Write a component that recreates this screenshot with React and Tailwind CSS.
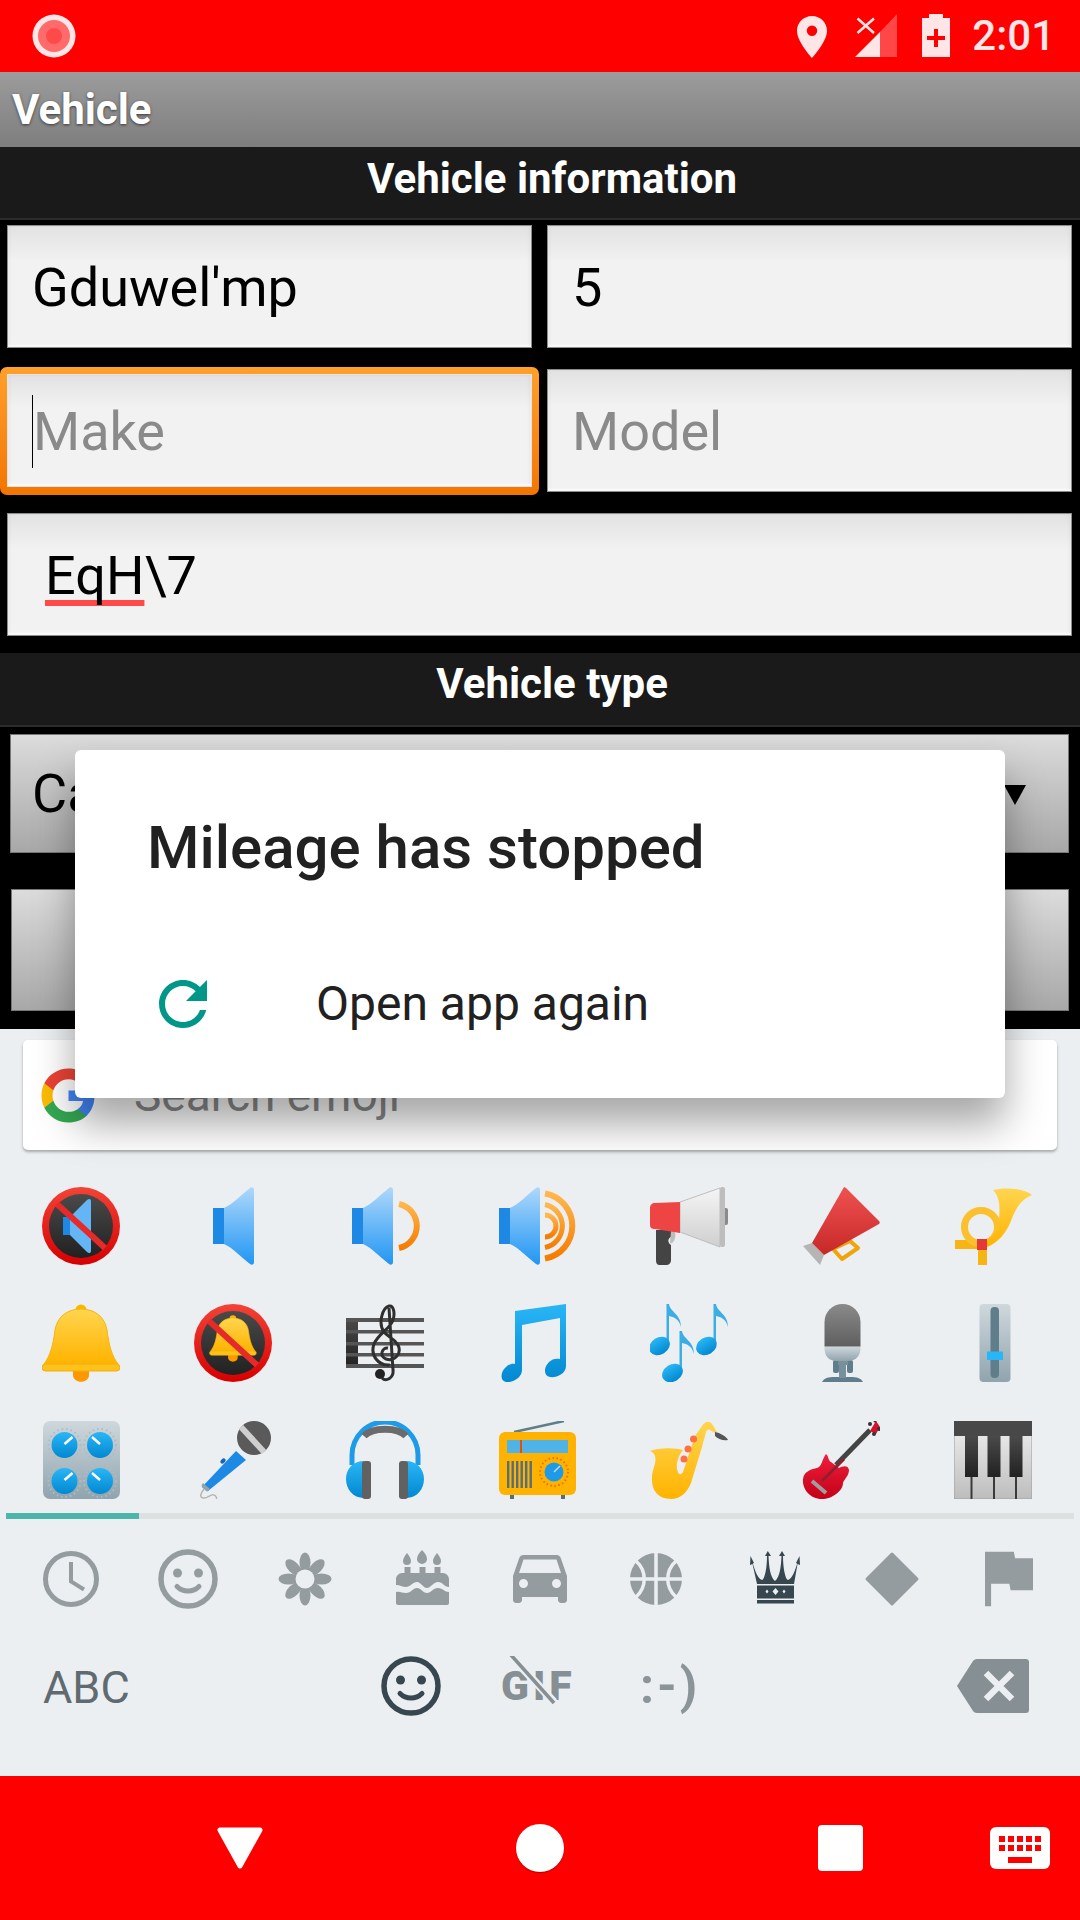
const roboto = "font-['Roboto',sans-serif]";

function Gradients() {
  const stops = {
    gBlue: ["#aed8fb", "#2196f3"],
    gBlueDeep: ["#29b6f6", "#0288d1"],
    gOrange: ["#ffb74d", "#f57c00"],
    gGold: ["#ffd54f", "#ffb300"],
    gDark: ["#4a4a4a", "#212121"],
    gRed: ["#f44336", "#d50000"],
    gCheer: ["#ef5350", "#c62828"],
    gSilver: ["#f5f5f5", "#cfcfcf"],
    gSteel: ["#cfd8dc", "#90a4ae"],
    gMic: ["#8a8a8a", "#5f5f5f"],
    gGuitar: ["#ef1f3c", "#c40018"],
  };
  return (
    <svg className="absolute w-0 h-0">
      <defs>
        {Object.entries(stops).map(([id, [a, b]]) => (
          <linearGradient key={id} id={id} x1="0" y1="0" x2="0" y2="1">
            <stop offset="0" stopColor={a} />
            <stop offset="1" stopColor={b} />
          </linearGradient>
        ))}
      </defs>
    </svg>
  );
}

function E({ children }) {
  return (
    <svg viewBox="0 0 78 78" className="w-[78px] h-[78px]">
      {children}
    </svg>
  );
}

function SpeakerShape({ x = 0 }) {
  return (
    <g transform={`translate(${x} 0)`}>
      <path d="M0 21h12v36H0z" fill="#1e88e5" />
      <path d="M11 21C20 17 28 8 37 1c2-1.500 4-.5 4 2v72c0 2.500-2 3.500-4 2C28 70 20 61 11 57z" fill="url(#gBlue)" />
    </g>
  );
}

function NoSign({ children }) {
  return (
    <E>
      <circle cx="39" cy="39" r="39" fill="url(#gRed)" />
      <circle cx="39" cy="39" r="32" fill="url(#gDark)" />
      {children}
      <path d="M15 17 63 61" stroke="#e62a2a" strokeWidth="6" />
    </E>
  );
}

function BellShape() {
  return (
    <g>
      <path d="M31 60h16v11c0 9-16 9-16 0z" fill="#ff9800" />
      <circle cx="39" cy="6" r="5.500" fill="#f9b700" />
      <path d="M39 5C24 5 15 14 13 26 11 42 8 52 2 60h74c-6-8-9-18-11-34C63 14 54 5 39 5z" fill="url(#gGold)" stroke="#f6b60a" strokeWidth="1" />
      <rect x="0" y="60" width="78" height="7" rx="3.500" fill="#fcc21b" stroke="#f2ae0c" strokeWidth="1" />
    </g>
  );
}

function Eighth({ x = 0, y = 0 }) {
  return (
    <g transform={`translate(${x} ${y})`}>
      <path d="M16.500 0h2.500c1 8 12 10 12 23-2-8-7-10-12-11v30h-2.500z" fill="#3aaee5" />
      <ellipse cx="9.500" cy="42" rx="11" ry="8.500" transform="rotate(-32 9.500 42)" fill="url(#gBlueDeep)" />
    </g>
  );
}

const emoji = [
  <NoSign key="mute">
    <path d="M21 30h8v18h-8z" fill="#1e88e5" />
    <path d="M28 30 45 13c2-2 4-1 4 1v50c0 2-2 3-4 1L28 48z" fill="#64b5f6" />
  </NoSign>,
  <E key="speaker">
    <SpeakerShape x={19} />
  </E>,
  <E key="speaker1">
    <SpeakerShape x={6} />
    <path d="M53 17a22.500 22.500 0 0 1 0 44" fill="none" stroke="url(#gOrange)" strokeWidth="6" />
  </E>,
  <E key="speaker3">
    <SpeakerShape x={1} />
    <g fill="none" stroke="url(#gOrange)">
      <path d="M47 6.500a33 33 0 0 1 0 65" strokeWidth="6" />
      <path d="M47 17.500a22 22 0 0 1 0 43" strokeWidth="5" />
      <path d="M47 28a11 11 0 0 1 0 22" strokeWidth="5" />
    </g>
  </E>,
  <E key="loud">
    <rect x="72" y="21" width="6" height="17" rx="2" fill="#8a8a8a" />
    <path d="M6 43h15v7c-4 2-3 6 0 8v15c0 3-2 5-5 5H10c-3 0-4-2-4-5z" fill="#444" />
    <path d="M21 44c4-1 5 3 4 7s-3 6-5 5z" fill="#bdbdbd" />
    <path d="M30 15 70 1v59L30 45z" fill="url(#gSilver)" stroke="#bdbdbd" strokeWidth="1" />
    <rect x="70" y="0" width="5" height="60" rx="2" fill="#bdbdbd" />
    <path d="M5 16l25-1v31L5 42c-3 0-5-1-5-4V21c0-3 2-5 5-5z" fill="#ef4444" />
  </E>,
  <E key="cheer">
    <path d="M31 62 48 54 56 61 40 72z" fill="none" stroke="#f0a30a" strokeWidth="4" strokeLinejoin="round" />
    <path d="M1 59 10 56 22 68 18 78z" fill="#b5b5b5" />
    <path d="M42 0c1 0 2 1 3 2l32 32c1 1 1 2 0 3L22 68 10 56z" fill="url(#gCheer)" />
  </E>,
  <E key="horn">
    <path d="M1 53h26v9H1z" fill="#f7b515" />
    <circle cx="27" cy="40" r="16.500" fill="none" stroke="#fbc02d" strokeWidth="7" />
    <path d="M39 3C50 0 70 1 78 8 68 12 62 20 57 34 52 46 44 57 30 61L30 54C40 51 44 42 45 33 46 20 46 10 39 3z" fill="url(#gGold)" />
    <rect x="23" y="52" width="10" height="11" fill="#e53935" />
    <path d="M24 63h9v15h-9z" fill="#f7b515" />
  </E>,
  <E key="bell">
    <BellShape />
  </E>,
  <NoSign key="nobell">
    <g transform="translate(15.500 11) scale(.6)">
      <BellShape />
    </g>
  </NoSign>,
  <E key="score">
    <rect x="0" y="14" width="12" height="50" fill="url(#gDark)" />
    <g fill="#555">
      <rect x="0" y="14" width="78" height="4" />
      <rect x="0" y="26" width="78" height="3.500" />
      <rect x="0" y="38" width="78" height="3.500" />
      <rect x="0" y="49" width="78" height="3.500" />
      <rect x="0" y="60" width="78" height="4" />
    </g>
    <path d="M42 44c-6-1-9 8-2 11 9 3 16-6 12-14-4-7-10-8-14-13-6-8-2-24 5-26 5-1 6 8 4 14-2 8-15 14-19 24-4 11 4 22 16 21M43 4l4 62c1 8-7 12-11 8" fill="none" stroke="#2f2f2f" strokeWidth="3" />
    <circle cx="34" cy="70" r="5" fill="#222" />
  </E>,
  <E key="note">
    <path d="M17 7 68 0v62c0 8-10 12-16 11-6-1-7-9-1-15 3-3 7-4 11-3V14L24 21v45c0 8-10 13-16 12-6-1-6-10 0-15 3-3 7-4 9-3z" fill="url(#gBlueDeep)" />
  </E>,
  <E key="notes">
    <Eighth x={0} y={0} />
    <Eighth x={47} y={0} />
    <Eighth x={13} y={27} />
  </E>,
  <E key="studio">
    <path d="M20 78c2-4 6-5 13-5h15c7 0 11 1 13 5z" fill="#607d8b" />
    <rect x="37" y="60" width="7" height="14" fill="#78909c" />
    <rect x="31" y="56" width="6" height="13" rx="2" fill="#607d8b" />
    <rect x="45" y="56" width="6" height="13" rx="2" fill="#607d8b" />
    <path d="M36 56h10v5H36z" fill="#78909c" />
    <path d="M22.500 42.500h36V44c0 8-5 13-12 13H34c-7 0-11.500-5-11.500-13z" fill="url(#gSteel)" />
    <path d="M22.500 18a18 18 0 0 1 36 0v24.500h-36z" fill="url(#gMic)" />
  </E>,
  <E key="level">
    <rect x="25.500" y="0" width="31" height="78" rx="4" fill="url(#gSteel)" />
    <rect x="36.500" y="3" width="8.500" height="71" rx="4" fill="#607d8b" />
    <rect x="33" y="47.500" width="16" height="8.500" fill="#29b6f6" />
  </E>,
  <E key="knobs">
    <rect x="1" y="0" width="77" height="78" rx="7" fill="url(#gSteel)" />
    {[
      [22.500, 24, 1],
      [58, 24, -1],
      [22.500, 60, 1],
      [58, 60, -1],
    ].map(([x, y, d], i) => (
      <g key={i}>
        <circle cx={x} cy={y} r="16" fill="none" stroke="#aebcc3" strokeWidth="2" strokeDasharray="1.500 3" />
        <circle cx={x} cy={y} r="13" fill="url(#gBlueDeep)" />
        <path d={`M${x} ${y - 1}l${d * 8} -7`} stroke="#fff" strokeWidth="2.500" />
      </g>
    ))}
  </E>,
  <E key="mic">
    <path d="M10 68c-3 4-5 8-1 9 5 1 8-5 11-3 3 1 2 3 3 4" fill="none" stroke="#b5b5b5" strokeWidth="1.500" />
    <path d="M8 66 42 30l10 9-38 31z" fill="#1e88e5" />
    <path d="M8 66c-1-1 0-3 1-4l7 6c-1 2-3 3-4 2z" fill="#90a4ae" />
    <ellipse cx="29" cy="40" rx="3" ry="2" transform="rotate(-45 29 40)" fill="#1565c0" />
    <circle cx="60" cy="17" r="17" fill="#5a5a5a" />
    <path d="M47 6 70 31" stroke="#cfcfcf" strokeWidth="6" />
  </E>,
  <E key="phones">
    <path d="M6 44V34a33 33 0 0 1 66 0v10" fill="none" stroke="#1e9be8" strokeWidth="5" />
    <path d="M18 15C26 6 52 6 60 15" fill="none" stroke="#6b6b6b" strokeWidth="7" />
    <path d="M18 40v37C7 77 0 68 0 58s7-18 18-18zM60 40v37c11 0 18-9 18-19s-7-18-18-18z" fill="url(#gBlueDeep)" />
    <rect x="16" y="40" width="9" height="38" rx="3" fill="#616161" />
    <rect x="53" y="40" width="9" height="38" rx="3" fill="#616161" />
  </E>,
  <E key="radio">
    <path d="M16 11 66 0" stroke="#607d8b" strokeWidth="2.500" />
    <rect x="12" y="72" width="4" height="6" fill="#546e7a" />
    <rect x="63" y="72" width="4" height="6" fill="#546e7a" />
    <rect x="1" y="11" width="77" height="63" rx="6" fill="#ffb300" />
    <rect x="9" y="19" width="61" height="13" fill="#4fb3e8" />
    <rect x="22" y="19" width="2" height="13" fill="#e65100" />
    <g fill="#546e7a">
      {[9, 13.500, 18, 22.500, 27, 31.500].map((x) => (
        <rect key={x} x={x} y="40" width="2.400" height="27" />
      ))}
    </g>
    <circle cx="56" cy="51" r="14" fill="none" stroke="#ef6c00" strokeWidth="2" strokeDasharray="1.500 2.500" />
    <circle cx="56" cy="51" r="9.500" fill="#1e9be8" />
    <path d="M56 51l6-6" stroke="#cfd8dc" strokeWidth="1.500" />
  </E>,
  <E key="sax">
    <path d="M0 30C10 26 26 27 33 29c-5 6-8 16-5 22 1 3 3 3 5 0L45 15l7-10c2-4 7-6 10-2l5 8-2 1-5-3c-2-1-3 0-4 2-1 5-3 10-4 15L41 62C37 72 30 78 21 78 7 78 1 68 2 56c0-8 5-14 3-21-1-3-3-4-5-5z" fill="url(#gGold)" />
    <circle cx="43.500" cy="18" r="3.500" fill="#ff7043" />
    <circle cx="38" cy="28" r="3.500" fill="#ff7043" />
    <circle cx="34" cy="38" r="3.500" fill="#ff7043" />
    <path d="M65 11c5 1 11 4 13 8-5 1-10-1-13-4z" fill="#555" />
  </E>,
  <E key="guitar">
    <path d="M34 44 68 9" stroke="#444" strokeWidth="5" />
    <path d="M24 33C27 35 26 40 29 41l8 6c4-2 9-3 10 2 0 6-5 9-6 13 0 8-11 16-21 16C8 78 0 68 1 58c1-8 9-10 14-11 5-1 5-9 9-14z" fill="url(#gGuitar)" />
    <path d="M10 60 24 72" stroke="#9e9e9e" strokeWidth="4" />
    <path d="M20 60 42 38" stroke="#8c2030" strokeWidth="3" />
    <path d="M68 10 74 0l4 6-4 7z" fill="#d7112c" />
    <g fill="#333">
      <circle cx="68" cy="3" r="2" />
      <circle cx="73" cy="0" r="1.500" />
      <circle cx="77" cy="8" r="2" />
      <circle cx="72" cy="13" r="2" />
    </g>
  </E>,
  <E key="piano">
    <defs>
      <linearGradient id="gKeys" x1="0" y1="0" x2="0" y2="1">
        <stop offset="0" stopColor="#f0f0f0" />
        <stop offset="1" stopColor="#bdbdbd" />
      </linearGradient>
    </defs>
    <rect x="0" y="0" width="78" height="78" fill="url(#gKeys)" stroke="#9e9e9e" strokeWidth="1" />
    <rect x="0" y="0" width="78" height="15" fill="#484848" />
    <g fill="url(#gDark)">
      <rect x="11" y="15" width="13" height="41" />
      <rect x="33.500" y="15" width="13" height="41" />
      <rect x="55.500" y="15" width="13" height="41" />
    </g>
    <g fill="#3a3a3a">
      <rect x="16.500" y="56" width="2" height="22" />
      <rect x="39" y="56" width="2" height="22" />
      <rect x="61" y="56" width="2" height="22" />
    </g>
  </E>,
];

function Clock() {
  return (
    <svg viewBox="0 0 60 60" className="w-[60px] h-[60px]" fill="none" stroke="#949ca0" strokeWidth="5">
      <circle cx="30" cy="30" r="25.500" />
      <path d="M30 13v19.500l13 8" strokeWidth="4" />
    </svg>
  );
}

function Smile({ color = "#949ca0" }) {
  return (
    <svg viewBox="0 0 60 60" className="w-[60px] h-[60px]" fill="none" stroke={color} strokeWidth="5.500">
      <circle cx="30" cy="30" r="27" />
      <circle cx="19.500" cy="24" r="4.500" fill={color} stroke="none" />
      <circle cx="40.500" cy="24" r="4.500" fill={color} stroke="none" />
      <path d="M19 37.500c6 6 16 6 22 0" strokeWidth="5" strokeLinecap="round" />
    </svg>
  );
}

function Flower() {
  return (
    <svg viewBox="0 0 60 60" className="w-[60px] h-[60px]" fill="#949ca0">
      {[0, 45, 90, 135, 180, 225, 270, 315].map((a) => (
        <ellipse key={a} cx="30" cy="13.500" rx="5.500" ry="10" transform={`rotate(${a} 30 30)`} />
      ))}
      <circle cx="30" cy="30" r="12" />
      <circle cx="30" cy="30" r="9.500" fill="#eceff1" />
    </svg>
  );
}

function Cake() {
  return (
    <svg viewBox="0 0 60 60" className="w-[60px] h-[60px] -translate-x-[1px]" fill="#949ca0">
      <path d="M15 4c2 3 4 5 4 8a4 4 0 0 1-8 0c0-3 2-5 4-8zM30 1c3 3 5 6 5 9a5 5 0 0 1-10 0c0-3 2-6 5-9zM45 4c2 3 4 5 4 8a4 4 0 0 1-8 0c0-3 2-5 4-8z" />
      <rect x="12.500" y="18" width="6" height="7" />
      <rect x="27.500" y="18" width="6" height="7" />
      <rect x="42.500" y="18" width="6" height="7" />
      <path d="M10 24h41c3 0 6 3 6 6v8c-5 0-6-5-11-5s-7 6-11 6-6-6-10-6-7 5-11 5-6-2-10-2v-6c0-3 3-6 6-6z" />
      <path d="M4 43c4-1 6 1 10 1 5 0 7-5 11-5s6 5 10 5 6-5 11-5 6 4 11 4v11c0 1-1 2-2 2H6c-1 0-2-1-2-2z" />
    </svg>
  );
}

function Car() {
  return (
    <svg viewBox="2 3 20 20" className="w-[60px] h-[60px]" fill="#949ca0">
      <path d="M18.920 6.010C18.720 5.420 18.160 5 17.500 5h-11c-.660 0-1.210.420-1.420 1.010L3 12v8c0 .550.450 1 1 1h1c.550 0 1-.450 1-1v-1h12v1c0 .550.450 1 1 1h1c.550 0 1-.450 1-1v-8l-2.080-5.990zM6.500 16c-.830 0-1.500-.670-1.500-1.500S5.670 13 6.500 13s1.500.670 1.500 1.500S7.330 16 6.500 16zm11 0c-.830 0-1.500-.670-1.500-1.500s.670-1.500 1.500-1.500 1.500.670 1.500 1.500-.670 1.500-1.500 1.500zM5 11l1.500-4.500h11L19 11H5z" />
    </svg>
  );
}

function Ball() {
  return (
    <svg viewBox="0 0 60 60" className="w-[60px] h-[60px] -translate-x-[1px]">
      <circle cx="30" cy="30" r="26" fill="#949ca0" />
      <g fill="none" stroke="#eceff1" strokeWidth="3.500">
        <path d="M30 2v56M2 30h56" />
        <path d="M10 12c11 10 11 26 0 36M50 12c-11 10-11 26 0 36" />
      </g>
    </svg>
  );
}

function Crown() {
  return (
    <svg viewBox="0 0 60 60" className="w-[60px] h-[60px]" fill="#37474f">
      <path d="M12 35 7.500 15 5 16l.5-9L9 14l-1.200.5C10 22 13 30 17 31c3-1 5-13 5-24h-2l2.800-5L26 7h-2.500C24 17 25 28 30 32c5-4 6-15 6.500-25H34l3-5 3 5h-2c0 11 2 23 5 24 4-1 7-9 9.200-16.500L51 14l3.500-7 .5 9-2.500-1L49 35z" />
      <rect x="12" y="36.500" width="37" height="13" />
      <rect x="12" y="51" width="37" height="3.500" />
      <path d="M30.500 39l3 3.500-3 3.500-3-3.500zM22 40.500l1.500 2-1.500 2-1.500-2zM39 40.500l1.500 2-1.500 2-1.500-2z" fill="#eceff1" />
    </svg>
  );
}

function Diamond() {
  return (
    <svg viewBox="0 0 60 60" className="w-[60px] h-[60px]" fill="#949ca0" stroke="#949ca0" strokeWidth="3" strokeLinejoin="round">
      <path d="M30 5 55 30 30 55 5 30z" />
    </svg>
  );
}

function Flag() {
  return (
    <svg viewBox="3.125 3.125 18.750 18.750" className="w-[60px] h-[60px]" fill="#949ca0">
      <path d="M14.400 6 14 4H5v17h1.900v-7h5.700l.4 2h7V6z" />
    </svg>
  );
}

function Backspace() {
  return (
    <svg viewBox="0 0 78 78" className="w-[78px] h-[78px]">
      <path d="M3 39 19 14c1-1 2-2 4-2h49c3 0 3 3 3 3v48c0 2-1 3-3 3H23c-2 0-3-1-4-2z" fill="#868f93" />
      <path d="M32 26 58 52M58 26 32 52" stroke="#eceff1" strokeWidth="6.500" />
    </svg>
  );
}

function GifOff() {
  return (
    <div className="relative w-[72px] h-[60px]">
      <span className={`${roboto} absolute left-0 top-[6px] text-[41px] leading-[48px] font-black tracking-[4px] text-[#868f93]`}>GIF</span>
      <svg viewBox="0 0 72 60" className="absolute inset-0 w-[72px] h-[60px]">
        <path d="M10 0 53 46" stroke="#eceff1" strokeWidth="8" />
        <path d="M10 -1 53 47" stroke="#868f93" strokeWidth="3.500" />
      </svg>
    </div>
  );
}

function Field({ children, focused, className = "" }) {
  const box =
    "h-full flex items-center pt-[1px] border bg-gradient-to-b from-[#e2e2e2] via-[#f2f2f2] via-[30%] to-[#f2f2f2] shadow-[inset_0_-2px_2px_rgba(255,255,255,0.7),inset_2px_0_3px_rgba(0,0,0,0.04),inset_-2px_0_3px_rgba(0,0,0,0.04)]";
  if (focused) {
    return (
      <div className={`relative h-full ${className}`}>
        <div className="absolute left-[-7px] right-[-7px] top-[-2px] bottom-[-3px] rounded-[7px] bg-gradient-to-b from-[#ffa02a] to-[#f37500]" />
        <div className={`relative ${box} border-[#e4e4e4] !h-[113px] mt-[5px]`}>{children}</div>
      </div>
    );
  }
  return <div className={`${box} border-[#8c8c8c] ${className}`}>{children}</div>;
}

export default function App() {
  return (
    <div className={`${roboto} relative w-[1080px] h-[1920px] flex flex-col bg-black overflow-hidden`}>
      <Gradients />

      {/* status bar */}
      <div className="h-[72px] flex items-center bg-[#ff0000] pl-[32px] pr-[25px]">
        <svg viewBox="0 0 44 44" className="w-[44px] h-[44px]">
          <circle cx="22" cy="22" r="21.500" fill="#ffe5e5" />
          <circle cx="22" cy="22" r="16" fill="#ff6b6b" />
          <circle cx="22" cy="22" r="8" fill="#ff4a4a" />
        </svg>
        <div className="ml-auto flex items-center">
          <svg viewBox="0 0 30 42" className="w-[30px] h-[42px] mt-[1px]">
            <path d="M15 0C6.700 0 0 6.600 0 14.800 0 26 15 42 15 42s15-16 15-27.200C30 6.600 23.300 0 15 0zm0 20a5.200 5.200 0 1 1 0-10.400A5.200 5.200 0 0 1 15 20z" fill="#ffe5e5" />
          </svg>
          <svg viewBox="0 0 42 44" className="ml-[28px] w-[42px] h-[44px]">
            <path d="M25 18 42 0v43H25z" fill="#ff4747" />
            <path d="M0 43 25 18v25z" fill="#ffe5e5" />
            <path d="M2.500 4.500 19 19M19 4.500 2.500 19" stroke="#ffe5e5" strokeWidth="2.500" />
          </svg>
          <svg viewBox="0 0 28 44" className="ml-[25px] w-[28px] h-[44px]">
            <path d="M7 0h14v4h7v39H0V4h7z" fill="#ffe5e5" />
            <path d="M12 15h4v7h7v4h-7v7h-4v-7H5v-4h7z" fill="#ff0000" />
          </svg>
          <span className="ml-[22px] text-[42px] leading-none font-medium text-[#ffe5e5]">2:01</span>
        </div>
      </div>

      {/* action bar */}
      <div className="h-[75px] flex items-center pl-[12px] bg-gradient-to-b from-[#9c9c9c] to-[#7e7e7e]">
        <span className="text-[42px] font-bold text-white [text-shadow:0_1px_3px_rgba(0,0,0,0.6)]">Vehicle</span>
      </div>

      <div className="h-[73px] flex items-center justify-center pl-[24px] pb-[8px] bg-[#1a1a1a] border-b-2 border-[#2c2c2c]">
        <span className="text-[42px] font-bold text-white">Vehicle information</span>
      </div>

      {/* form */}
      <div className="pl-[7px] pr-[8px] pt-[5px] flex flex-col text-[54px] text-black">
        <div className="grid grid-cols-2 gap-x-[15px] h-[123px]">
          <Field className="pl-[24px]">Gduwel'mp</Field>
          <Field className="pl-[24px]">5</Field>
        </div>
        <div className="grid grid-cols-2 gap-x-[15px] h-[123px] mt-[21px]">
          <Field focused className="text-[#8a8a8a]">
            <span className="ml-[24px] w-px h-[73px] bg-black" />
            <span>Make</span>
          </Field>
          <Field className="pl-[24px] text-[#8a8a8a]">Model</Field>
        </div>
        <Field className="!h-[123px] mt-[21px] pl-[37px]">
          <span className="underline decoration-[#ff4a4a] decoration-[6px] underline-offset-[6px] [text-decoration-skip-ink:none]">EqH</span>
          <span>\7</span>
        </Field>
      </div>

      <div className="mt-[17px] h-[74px] flex items-center justify-center pl-[24px] pb-[12px] bg-[#1a1a1a] border-b-2 border-[#2c2c2c]">
        <span className="text-[42px] font-bold text-white">Vehicle type</span>
      </div>

      <div className="mt-[7px] ml-[10px] mr-[11px] h-[119px] flex items-center justify-between pl-[21px] pr-[42px] border border-[#777] bg-gradient-to-b from-[#dcdcdc] to-[#a8a8a8] text-[54px] text-black">
        <span>Car</span>
        <span className="w-0 h-0 mt-[3px] border-x-[11px] border-x-transparent border-t-[20px] border-t-black" />
      </div>
      <div className="mt-[36px] ml-[11px] mr-[11px] h-[122px] border border-[#777] bg-gradient-to-b from-[#dcdcdc] to-[#a8a8a8]" />

      {/* emoji keyboard */}
      <div className="mt-[18px] flex-1 flex flex-col bg-[#eceff1]">
        <div className="mt-[11px] mx-[23px] h-[110px] flex items-center rounded-[5px] bg-white shadow-[0_2px_3px_rgba(0,0,0,0.3)]">
          <svg viewBox="0 0 48 48" className="ml-[16px] w-[59px] h-[59px]">
            <path fill="#4285f4" d="M45.120 24.500c0-1.560-.140-3.060-.400-4.500H24v8.510h11.840c-.510 2.750-2.060 5.080-4.390 6.640v5.520h7.110c4.160-3.830 6.560-9.470 6.560-16.170z" />
            <path fill="#34a853" d="M24 46c5.940 0 10.920-1.970 14.560-5.330l-7.110-5.520c-1.970 1.320-4.490 2.100-7.450 2.100-5.730 0-10.580-3.870-12.310-9.070H4.340v5.700C7.960 41.070 15.400 46 24 46z" />
            <path fill="#fbbc05" d="M11.690 28.180C11.250 26.860 11 25.450 11 24s.250-2.860.690-4.180v-5.700H4.340C2.850 17.090 2 20.450 2 24c0 3.550.850 6.910 2.340 9.880l7.350-5.700z" />
            <path fill="#ea4335" d="M24 10.750c3.230 0 6.130 1.110 8.410 3.290l6.310-6.310C34.910 4.180 29.930 2 24 2 15.400 2 7.960 6.930 4.340 14.120l7.350 5.700c1.730-5.200 6.580-9.070 12.310-9.070z" />
          </svg>
          <span className="ml-[36px] text-[46px] text-[#8a8a8a]">Search emoji</span>
        </div>

        <div className="mt-[37px] pl-[5px] grid grid-cols-[repeat(7,152px)] gap-y-[39px]">
          {emoji.map((icon, i) => (
            <div key={i} className="flex justify-center">
              {icon}
            </div>
          ))}
        </div>

        <div className="mt-[14px] mx-[6px] h-[6px] bg-[#dce0e1]">
          <div className="w-[133px] h-full bg-[#4db6ac]" />
        </div>

        <div className="h-[120px] px-[12px] grid grid-cols-9 items-center justify-items-center">
          <Clock />
          <Smile />
          <Flower />
          <Cake />
          <Car />
          <Ball />
          <Crown />
          <Diamond />
          <Flag />
        </div>

        <div className="h-[94px] flex items-center">
          <span className="w-[381px] pl-[43px] pt-[4px] text-[45px] text-[#5f6b70]">ABC</span>
          <Smile color="#37474f" />
          <div className="ml-[60px]">
            <GifOff />
          </div>
          <span className="ml-[67px] text-[50px] font-bold tracking-[3px] text-[#8a9499]">:-)</span>
          <div className="ml-auto mr-[48px]">
            <Backspace />
          </div>
        </div>
      </div>

      {/* nav bar */}
      <div className="h-[144px] flex items-center pl-[90px] bg-[#ff0000]">
        <div className="w-[300px] flex justify-center">
          <svg viewBox="0 0 48 42" className="w-[48px] h-[42px]">
            <path d="M4 3h40L24 39z" fill="#fff" stroke="#fff" strokeWidth="5" strokeLinejoin="round" />
          </svg>
        </div>
        <div className="w-[300px] flex justify-center">
          <div className="w-[48px] h-[48px] rounded-full bg-white shadow-[0_1px_1px_rgba(120,0,0,0.6)]" />
        </div>
        <div className="w-[300px] flex justify-center">
          <div className="w-[45px] h-[46px] rounded-[4px] bg-white" />
        </div>
        <svg viewBox="0 0 60 42" className="w-[60px] h-[42px]">
          <rect width="60" height="42" rx="6" fill="#fff" />
          <g fill="#ff0000">
            {[9, 18, 27, 36, 45].map((x) => (
              <g key={x}>
                <rect x={x} y="9" width="6" height="6" />
                <rect x={x} y="18" width="6" height="6" />
              </g>
            ))}
            <rect x="18" y="30" width="24" height="6" />
          </g>
        </svg>
      </div>

      {/* crash dialog */}
      <div className="absolute left-[75px] top-[750px] w-[930px] h-[348px] rounded-[6px] bg-white shadow-[0_26px_40px_rgba(0,0,0,0.35)] flex flex-col">
        <h1 className="mt-[63px] ml-[72px] text-[60px] leading-[70px] font-medium text-[#212121]">Mileage has stopped</h1>
        <div className="mt-[85px] ml-[72px] flex items-center">
          <svg viewBox="0 0 24 24" className="w-[72px] h-[72px]" fill="#009688">
            <path d="M17.650 6.350C16.200 4.900 14.210 4 12 4c-4.420 0-7.990 3.580-7.990 8s3.570 8 7.990 8c3.730 0 6.840-2.550 7.730-6h-2.080c-.820 2.330-3.040 4-5.650 4-3.310 0-6-2.690-6-6s2.690-6 6-6c1.660 0 3.140.690 4.220 1.780L13 11h7V4l-2.350 2.350z" />
          </svg>
          <span className="ml-[97px] text-[48px] text-[#212121]">Open app again</span>
        </div>
      </div>
    </div>
  );
}
